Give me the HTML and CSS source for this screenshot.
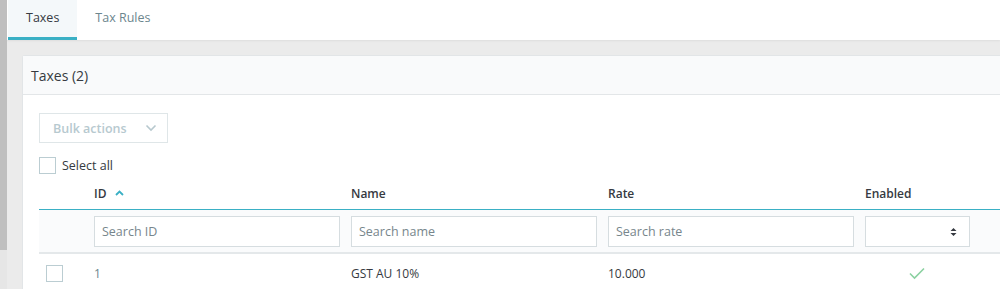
FILE: index.html
```html
<!DOCTYPE html>
<html>
<head>
<meta charset="utf-8">
<link rel="stylesheet" href="styles.css">
</head>
<body>
<div class="page">
  <div class="side"><div class="side-bar"></div></div>
  <div class="main">
    <nav class="tabs">
      <a class="tab active">Taxes</a>
      <a class="tab">Tax Rules</a>
    </nav>
    <div class="content">
      <section class="card">
        <header class="card-header">Taxes (2)</header>
        <div class="card-body">
          <button class="bulk">Bulk actions
            <svg width="12" height="8" viewBox="0 0 12 8"><path d="M1.5 1.5 L6 6 L10.5 1.5" fill="none" stroke="#b7c8ce" stroke-width="1.6"/></svg>
          </button>
          <label class="select-all"><span class="cb"></span>Select all</label>
          <div class="table">
            <div class="row head">
              <div class="c c0"></div>
              <div class="c">ID <svg class="caret" width="9" height="6" viewBox="0 0 9 6"><path d="M1 5 L4.5 1.5 L8 5" fill="none" stroke="#3ab0c5" stroke-width="1.8"/></svg></div>
              <div class="c">Name</div>
              <div class="c">Rate</div>
              <div class="c">Enabled</div>
            </div>
            <div class="row filters">
              <div class="c c0"></div>
              <div class="c"><div class="input">Search ID</div></div>
              <div class="c"><div class="input">Search name</div></div>
              <div class="c"><div class="input">Search rate</div></div>
              <div class="c"><div class="input select"><svg width="7" height="10" viewBox="0 0 7 10"><path d="M0.5 4 L3.5 1 L6.5 4 Z M0.5 6 L3.5 9 L6.5 6 Z" fill="#363a41"/></svg></div></div>
            </div>
            <div class="row data">
              <div class="c c0"><span class="cb"></span></div>
              <div class="c muted">1</div>
              <div class="c">GST AU 10%</div>
              <div class="c">10.000</div>
              <div class="c check"><svg width="18" height="14" viewBox="0 0 18 14"><path d="M2 7.5 L6.5 12 L16 2.5" fill="none" stroke="#8bd1a1" stroke-width="1.6"/></svg></div>
            </div>
          </div>
        </div>
      </section>
    </div>
  </div>
</div>
</body>
</html>
```
FILE: styles.css
```css
* { box-sizing: border-box; }
html, body { margin: 0; padding: 0; }
body {
  font-family: "Open Sans", "Liberation Sans", sans-serif;
  font-size: 12px;
  color: #363a41;
  background: #eaeaea;
  width: 1000px;
  height: 289px;
  overflow: hidden;
}
.page { display: flex; height: 289px; overflow: hidden; }
.side { width: 7px; background: #e6e6e6; flex: none; }
.side-bar { height: 250px; background: #bfbfbf; }
.main { flex: 1; min-width: 0; background: #ebebeb; overflow: hidden; }
.tabs {
  display: flex;
  height: 40px;
  background: #fff;
  padding-left: 1px;
  box-shadow: 0 1px 2px rgba(0,0,0,0.06);
}
.tab {
  display: flex;
  align-items: center;
  padding: 0 18px 3px;
  font-size: 12.5px;
  color: #6c868e;
  border-bottom: 3px solid transparent;
}
.tab.active {
  background: #f4f8fa;
  color: #363a41;
  border-bottom-color: #3ab0c5;
}
.content { padding: 15px 0 0 15px; }
.card {
  background: #fff;
  border: 1px solid #e2e5e7;
  border-right: 0;
  border-bottom: 0;
  border-radius: 3px 0 0 0;
}
.card-header {
  height: 39px;
  background: #f9fafb;
  border-bottom: 1px solid #e3e6e8;
  padding-left: 8px;
  display: flex;
  align-items: center;
  font-size: 14px;
  color: #363a41;
}
.card-body { padding: 18px 0 0 16px; }
.bulk {
  display: flex;
  align-items: center;
  gap: 18px;
  height: 30px;
  width: 129px;
  padding: 0 0 0 13px;
  border: 1px solid #dfe6e8;
  background: #fff;
  font-family: inherit;
  font-size: 12.5px;
  font-weight: 600;
  color: #b7c9cf;
}
.select-all {
  display: flex;
  align-items: center;
  gap: 6px;
  margin-top: 14px;
  font-size: 12.5px;
  color: #363a41;
}
.cb {
  display: inline-block;
  width: 17px;
  height: 17px;
  border: 1px solid #bbcdd2;
  background: #fff;
}
.table { margin-top: 5px; }
.row {
  display: grid;
  grid-template-columns: 49px 257px 257px 257px 200px;
}
.c { padding-left: 6px; display: flex; align-items: center; }
.c0 { padding-left: 0; }
.head {
  height: 31px;
  border-bottom: 1px solid #3ab0c5;
  font-weight: 600;
  font-size: 12px;
  padding-bottom: 2px;
}
.caret { margin-left: 9px; }
.filters {
  height: 44px;
  background: #fafbfc;
  border-bottom: 2px solid #e4e8ea;
  padding-top: 1px;
}
.input {
  width: 246px;
  height: 31px;
  border: 1px solid #d6dde0;
  background: #fff;
  display: flex;
  align-items: center;
  padding-left: 7px;
  font-size: 12.5px;
  color: #77868c;
}
.input.select {
  width: 105px;
  justify-content: flex-end;
  padding-right: 12px;
}
.data { height: 38px; font-size: 12px; color: #363a41; }
.data .c0 { padding-left: 7px; }
.muted { color: #6c868e; }
.check { padding-left: 49px; }
```
